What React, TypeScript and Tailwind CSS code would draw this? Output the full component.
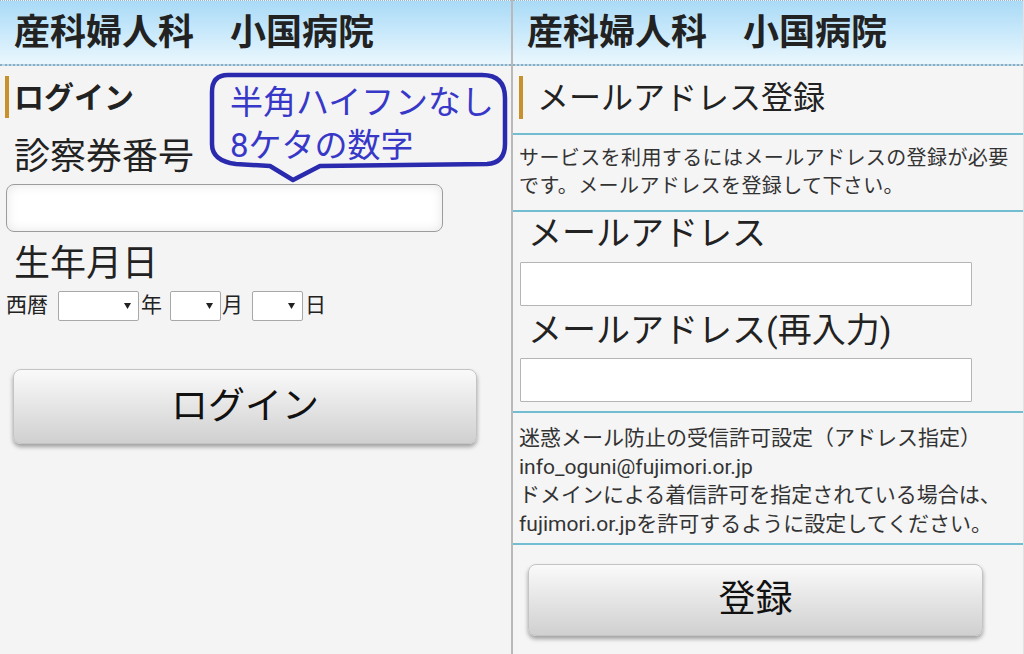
const font = { fontFamily: 'Roboto, "Noto Sans CJK JP", sans-serif' };

function Header() {
  return (
    <div className="h-[66px] border-t border-[#9fb3c0] border-b-2 border-b-[#9aaab5] border-dotted bg-gradient-to-b from-[#a9daf6] via-[#c9e9fb] to-[#eaf7fd] flex items-center pl-[14px]">
      <span className="text-[36px] font-bold text-[#222] leading-none">産科婦人科　小国病院</span>
    </div>
  );
}

function Select({ w }: { w: string }) {
  return (
    <div className={`${w} h-[30px] bg-white border border-[#a8a8a8] rounded-[2px] flex items-center justify-end pr-[7px]`}>
      <svg width="7" height="6" viewBox="0 0 7 6">
        <path d="M0 0 L7 0 L3.5 6 Z" fill="#222" />
      </svg>
    </div>
  );
}

function Button({ label, cls }: { label: string; cls: string }) {
  return (
    <div
      className={`${cls} rounded-[8px] border border-[#c4c4c4] bg-gradient-to-b from-[#fafafa] to-[#d0d0d0] shadow-[0_3px_4px_rgba(0,0,0,0.35)] flex items-center justify-center text-[37px] text-[#111]`}
    >
      {label}
    </div>
  );
}

function LoginPanel() {
  return (
    <div className="relative w-[511px] h-[654px] bg-[#f4f4f4] overflow-hidden">
      <Header />
      <div className="mt-[10px] ml-[5px] h-[42px] flex items-center border-l-4 border-[#c8912c] pl-[5px]">
        <span className="text-[30px] font-bold text-[#222]">ログイン</span>
      </div>
      <div className="mt-[17px] h-[44px] flex items-center pl-[14px] text-[36px] text-[#222]">診察券番号</div>
      <div className="mt-[5px] ml-[6px] w-[437px] h-[48px] rounded-[8px] border border-[#9c9c9c] bg-white shadow-[inset_0_0_12px_rgba(0,0,0,0.1)]" />
      <div className="mt-[10px] h-[44px] flex items-center pl-[14px] text-[36px] text-[#222]">生年月日</div>
      <div className="mt-[5px] h-[30px] flex items-center pl-[6px] text-[21px] text-[#222]">
        <span>西暦</span>
        <div className="ml-[10px]"><Select w="w-[81px]" /></div>
        <span className="ml-[2px]">年</span>
        <div className="ml-[8px]"><Select w="w-[51px]" /></div>
        <span className="ml-[1px]">月</span>
        <div className="ml-[9px]"><Select w="w-[51px]" /></div>
        <span className="ml-[2px]">日</span>
      </div>
      <Button label="ログイン" cls="mt-[48px] ml-[13px] w-[464px] h-[75px]" />

      {/* 吹き出し（注記） */}
      <div className="absolute left-0 top-0 w-[511px] h-[200px] pointer-events-none">
        <svg width="511" height="200" className="absolute left-0 top-0">
          <path
            d="M228 75 L482 75 Q505 75 505 98 L505 144 Q505 163 487 164 L320 166 L293 180 L270 166 L236 164 Q212 161 212 144 L212 92 Q212 75 228 75 Z"
            fill="none"
            stroke="#2a2aae"
            strokeWidth="4.5"
            strokeLinejoin="round"
          />
        </svg>
        <div className="absolute left-[230px] top-[81px] text-[33px] leading-[43px] text-[#3838c8]">
          <div>半角ハイフンなし</div>
          <div>8ケタの数字</div>
        </div>
      </div>
    </div>
  );
}

function MailPanel() {
  return (
    <div className="w-[511px] h-[654px] bg-[#f5f5f5] overflow-hidden border-r border-[#e2e2e2]">
      <Header />
      <div className="mt-[10px] ml-[6px] h-[43px] flex items-center border-l-4 border-[#c8912c] pl-[14px]">
        <span className="text-[32px] text-[#222]">メールアドレス登録</span>
      </div>
      <div className="mt-[14px] h-[2px] bg-[#72bdd2]" />
      <div className="pt-[9px] pb-[10px] pl-[6px] text-[20px] leading-[28px] tracking-[0.4px] text-[#333]">
        サービスを利用するにはメールアドレスの登録が必要
        <br />
        です。メールアドレスを登録して下さい。
      </div>
      <div className="h-[2px] bg-[#72bdd2]" />
      <div className="mt-[1px] h-[40px] flex items-center pl-[15px] text-[34px] text-[#222]">メールアドレス</div>
      <div className="mt-[9px] ml-[7px] w-[452px] h-[44px] bg-white border border-[#b5b5b5] rounded-[1px]" />
      <div className="mt-[4px] h-[40px] flex items-center pl-[15px] text-[34px] text-[#222]">メールアドレス(再入力)</div>
      <div className="mt-[8px] ml-[7px] w-[452px] h-[44px] bg-white border border-[#b5b5b5] rounded-[1px]" />
      <div className="mt-[9px] h-[2px] bg-[#72bdd2]" />
      <div className="pt-[11px] pb-[5px] pl-[6px] text-[21px] leading-[28.5px] text-[#333]">
        迷惑メール防止の受信許可設定（アドレス指定）
        <br />
        info_oguni@fujimori.or.jp
        <br />
        ドメインによる着信許可を指定されている場合は、
        <br />
        fujimori.or.jpを許可するように設定してください。
      </div>
      <div className="h-[2px] bg-[#72bdd2]" />
      <Button label="登録" cls="mt-[19px] ml-[15px] w-[455px] h-[72px]" />
    </div>
  );
}

export default function App() {
  return (
    <div className="w-[1024px] h-[654px] flex bg-[#f4f4f4] overflow-hidden" style={font}>
      <LoginPanel />
      <div className="w-[2px] bg-[#b9b9b9]" />
      <MailPanel />
    </div>
  );
}
